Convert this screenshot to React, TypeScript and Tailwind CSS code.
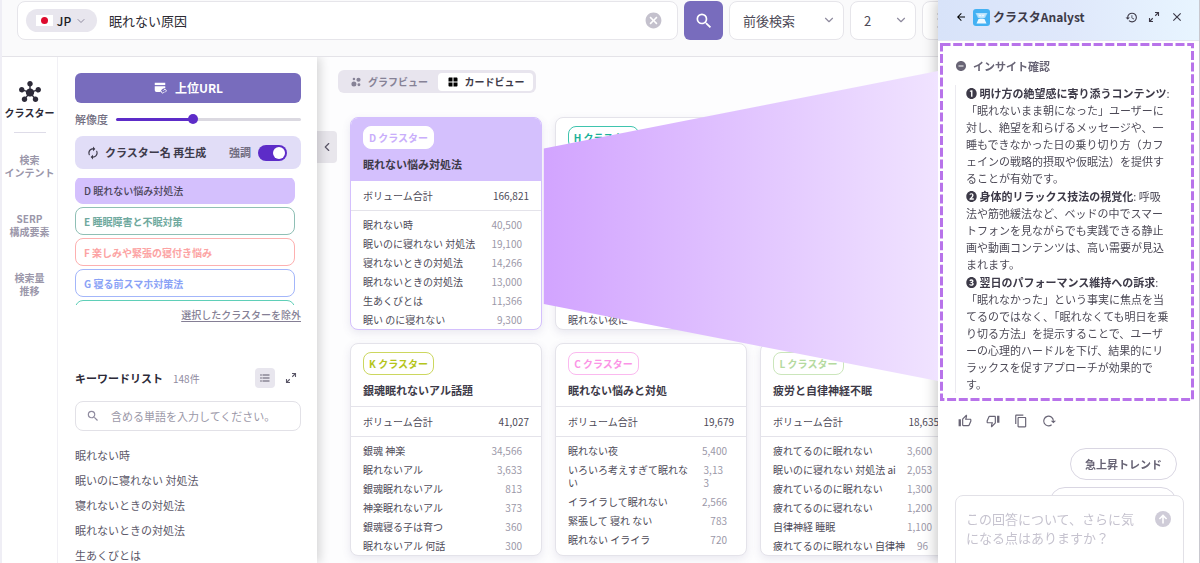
import React from "react";
import { ChevronDown, ChevronLeft } from "lucide-react";
import {
  MdArrowBack,
  MdAutorenew,
  MdCancel,
  MdClose,
  MdContentCopy,
  MdFormatListBulleted,
  MdHistory,
  MdHub,
  MdOutlineThumbDown,
  MdOutlineThumbUp,
  MdRemoveCircle,
  MdSearch,
  MdWindow,
} from "react-icons/md";

type Row = { name: string; value: string; wrapped?: boolean };
type Cluster = {
  tag: string;
  tagClass: string;
  title: string;
  total: string;
  active?: boolean;
  rows: Row[];
};

const clusters: Cluster[] = [
  {
    tag: "D クラスター",
    tagClass: "border-white bg-white text-[#c9aefb]",
    title: "眠れない悩み対処法",
    total: "166,821",
    active: true,
    rows: [
      { name: "眠れない時", value: "40,500" },
      { name: "眠いのに寝れない 対処法", value: "19,100" },
      { name: "寝れないときの対処法", value: "14,266" },
      { name: "眠れないときの対処法", value: "13,000" },
      { name: "生あくびとは", value: "11,366" },
      { name: "眠い のに寝れない", value: "9,300" },
    ],
  },
  {
    tag: "H クラスター",
    tagClass: "border-[#3fc4ae] text-[#1bb198]",
    title: "",
    total: "",
    rows: [
      { name: "", value: "" },
      { name: "", value: "" },
      { name: "", value: "" },
      { name: "", value: "" },
      { name: "", value: "" },
      { name: "眠れない夜に", value: "" },
    ],
  },
  { tag: "", tagClass: "border-transparent", title: "", total: "", rows: [] },
  {
    tag: "K クラスター",
    tagClass: "border-[#ccd75f] text-[#b5c51c]",
    title: "銀魂眠れないアル話題",
    total: "41,027",
    rows: [
      { name: "銀魂 神楽", value: "34,566" },
      { name: "眠れないアル", value: "3,633" },
      { name: "銀魂眠れないアル", value: "813" },
      { name: "神楽眠れないアル", value: "373" },
      { name: "銀魂寝る子は育つ", value: "360" },
      { name: "眠れないアル 何話", value: "300" },
    ],
  },
  {
    tag: "C クラスター",
    tagClass: "border-[#fbb9ef] text-[#fb94e6]",
    title: "眠れない悩みと対処",
    total: "19,679",
    rows: [
      { name: "眠れない夜", value: "5,400" },
      { name: "いろいろ考えすぎて眠れな\nい", value: "3,13\n3", wrapped: true },
      { name: "イライラして眠れない", value: "2,566" },
      { name: "緊張して 寝れ ない", value: "783" },
      { name: "眠れない イライラ", value: "720" },
    ],
  },
  {
    tag: "L クラスター",
    tagClass: "border-[#cbe6bb] text-[#b5daa0]",
    title: "疲労と自律神経不眠",
    total: "18,635",
    rows: [
      { name: "疲れてるのに眠れない", value: "3,600" },
      { name: "眠いのに寝れない 対処法 ai", value: "2,053" },
      { name: "疲れているのに眠れない", value: "1,300" },
      { name: "疲れてるのに寝れない", value: "1,200" },
      { name: "自律神経 睡眠", value: "1,100" },
      { name: "疲れてるのに眠れない 自律神", value: "96", wrapped: true },
    ],
  },
];

const clusterItems = [
  { label: "D 眠れない悩み対処法", style: "border-[#d4c0fd] bg-[#d4c0fd] text-[#4a4458]" },
  { label: "E 睡眠障害と不眠対策", style: "border-[#8fbfb5] text-[#6fa99e]" },
  { label: "F 楽しみや緊張の寝付き悩み", style: "border-[#fdb0b0] text-[#fca3a3]" },
  { label: "G 寝る前スマホ対策法", style: "border-[#a3b6fa] text-[#8aa2f6]" },
  { label: "", style: "border-[#5fcfb8] text-[#1bb198]" },
];

const keywords = [
  "眠れない時",
  "眠いのに寝れない 対処法",
  "寝れないときの対処法",
  "眠れないときの対処法",
  "生あくびとは",
];

const railItems = [
  ["検索", "インテント"],
  ["SERP", "構成要素"],
  ["検索量", "推移"],
];

const insights = [
  {
    head: "❶ 明け方の絶望感に寄り添うコンテンツ",
    tail: ":",
    lines: [
      "「眠れないまま朝になった」ユーザーに",
      "対し、絶望を和らげるメッセージや、一",
      "睡もできなかった日の乗り切り方（カフ",
      "ェインの戦略的摂取や仮眠法）を提供す",
      "ることが有効です。",
    ],
  },
  {
    head: "❷ 身体的リラックス技法の視覚化",
    tail: ": 呼吸",
    lines: [
      "法や筋弛緩法など、ベッドの中でスマー",
      "トフォンを見ながらでも実践できる静止",
      "画や動画コンテンツは、高い需要が見込",
      "まれます。",
    ],
  },
  {
    head: "❸ 翌日のパフォーマンス維持への訴求",
    tail: ":",
    lines: [
      "「眠れなかった」という事実に焦点を当",
      "てるのではなく、「眠れなくても明日を乗",
      "り切る方法」を提示することで、ユーザ",
      "ーの心理的ハードルを下げ、結果的にリ",
      "ラックスを促すアプローチが効果的で",
      "す。",
    ],
  },
];

function TopUrlIcon() {
  return (
    <svg viewBox="0 0 24 24" className="size-3.5" fill="none" aria-hidden="true">
      <path d="M3 3h18v4H3z" fill="currentColor" />
      <path d="M3 9h18v3.5a7 7 0 0 0-8 6.5H6a3 3 0 0 1-3-3z" fill="currentColor" />
      <path d="M17.5 16.5 19 15a2 2 0 0 1 3 3l-1.5 1.5M19.500 18.500 18 20a2 2 0 0 1-3-3" stroke="currentColor" strokeWidth="1.600" />
    </svg>
  );
}

function BubbleIcon() {
  return (
    <svg viewBox="0 0 24 24" className="size-2.5" fill="currentColor" aria-hidden="true">
      <circle cx="7" cy="16.500" r="6" />
      <circle cx="7" cy="5" r="3" />
      <circle cx="18" cy="6.500" r="5" />
      <circle cx="19" cy="18.500" r="3.500" />
    </svg>
  );
}

function ExpandIcon() {
  return (
    <svg viewBox="0 0 24 24" className="size-3" fill="none" stroke="currentColor" strokeWidth="2.200" aria-hidden="true">
      <path d="M14 3h7v7M21 3l-6.500 6.500M10 21H3v-7M3 21l6.500-6.500" />
    </svg>
  );
}

function AnalystIcon() {
  return (
    <svg viewBox="0 0 34 34" className="size-[17px]" aria-hidden="true">
      <rect width="34" height="34" rx="6" fill="#43b1f3" />
      <path d="M5 8h24l-5 10H10z" fill="#a9dcfb" />
      <path d="M8 9h18l-4 8H12z" fill="#c6e8fd" />
      <path d="M13 18h8v3h-8z" fill="#7cc9f8" />
      <path d="M11 20h12l4 9H7z" fill="#eef9ff" />
      <circle cx="14" cy="13" r="1.500" fill="#fff" />
      <circle cx="20" cy="13" r="1.500" fill="#fff" />
    </svg>
  );
}

function Header() {
  return (
    <header className="relative z-20 flex h-[57px] shrink-0 items-start gap-1.5 border-b border-[#e4e3e8] bg-[#fafafb] pl-[15px] pt-px text-[13px]">
      <div className="flex h-[39px] w-[661px] shrink-0 items-center rounded-lg border border-[#e6e5ea] bg-white pl-2 pr-3.5">
        <button className="flex h-[23px] w-[71px] items-center justify-center gap-1 rounded-full bg-[#e8e6ee] text-xs font-medium text-[#1c1b22]">
          <span className="flex h-[11px] w-[17px] items-center justify-center bg-white">
            <span className="size-[7px] rounded-full bg-[#dd0a2d]" />
          </span>
          JP
          <ChevronDown className="size-3 text-[#8f8b9f]" />
        </button>
        <input
          aria-label="検索キーワード"
          defaultValue="眠れない原因"
          className="ml-3 min-w-0 flex-1 text-[13px] text-[#2c2a33] outline-none"
        />
        <button aria-label="クリア">
          <MdCancel className="size-[19px] text-[#c4c1cd]" />
        </button>
      </div>
      <button aria-label="検索" className="flex size-[39px] shrink-0 items-center justify-center rounded-md bg-[#786cbd] text-white">
        <MdSearch className="size-5" />
      </button>
      <div className="relative w-[115px] shrink-0">
        <select
          aria-label="検索方法"
          className="h-[39px] w-full appearance-none rounded-lg border border-[#e6e5ea] bg-white pl-[13px] text-[#4d4a57]"
        >
          <option>前後検索</option>
        </select>
        <ChevronDown className="pointer-events-none absolute right-2 top-3 size-3.5 text-[#8f8b9f]" />
      </div>
      <div className="relative w-[66px] shrink-0">
        <select
          aria-label="階層"
          className="h-[39px] w-full appearance-none rounded-lg border border-[#e6e5ea] bg-white pl-[13px] text-[#4d4a57]"
        >
          <option>2</option>
        </select>
        <ChevronDown className="pointer-events-none absolute right-2 top-3 size-3.5 text-[#8f8b9f]" />
      </div>
      <button aria-label="メニュー" className="flex h-[39px] w-20 shrink-0 items-center rounded-lg border border-[#e6e5ea] bg-white pl-3.5 text-[#8f8b9f]">
        <svg viewBox="0 0 10 20" className="h-5 w-2.5" fill="currentColor" aria-hidden="true">
          <circle cx="1.500" cy="3" r="1" />
          <circle cx="1.500" cy="8" r="1" />
          <circle cx="1.500" cy="16" r="1" />
        </svg>
      </button>
    </header>
  );
}

function Rail() {
  return (
    <nav className="relative z-20 flex w-14 shrink-0 flex-col items-center border-r border-[#f1f0f5] bg-white text-center text-[10px] font-bold leading-[13px] text-[#9b97aa]">
      <a href="#cluster" className="mt-6 flex flex-col items-center gap-[3px] text-[#2c2a38]">
        <MdHub className="size-[22px]" />
        クラスター
      </a>
      <hr className="mt-[13px] mb-5 w-8 border-[#dedce8]" />
      {railItems.map(([first, second]) => (
        <a key={first} href={"#" + first} className="mb-[33px] block">
          {first}
          <br />
          {second}
        </a>
      ))}
    </nav>
  );
}

function SidePanel() {
  return (
    <aside className="relative z-10 flex w-[259px] shrink-0 flex-col bg-white pl-[17px] pr-4 pt-4 text-[11px] shadow-[3px_0_10px_rgba(0,0,0,0.16)]">
      <button className="flex h-[30px] shrink-0 items-center justify-center gap-2 rounded-md bg-[#786cbd] text-xs font-bold text-white">
        <TopUrlIcon />
        上位URL
      </button>
      <label className="flex h-8 shrink-0 items-center gap-2 font-medium text-[#716d80]">
        解像度
        <span className="relative flex h-3 flex-1 items-center">
          <input type="range" defaultValue={41} className="absolute inset-0 z-10 w-full opacity-0" />
          <span className="h-[3px] w-[41%] rounded-full bg-[#5d2cc8]" />
          <span className="relative -mx-1 size-2.5 rounded-full bg-[#5d2cc8]" />
          <span className="h-[3px] flex-1 rounded-full bg-[#dbd9e1]" />
        </span>
      </label>
      <div className="mt-px flex h-[33px] shrink-0 items-center rounded-lg bg-[#e1ddf7] pl-[11px] pr-3.5">
        <button className="flex items-center gap-[5px] font-bold text-[#3d3a4a]">
          <MdAutorenew className="size-3.5" />
          クラスター名 再生成
        </button>
        <label className="relative ml-auto flex items-center gap-[7px] font-bold text-[#716d80]">
          強調
          <input type="checkbox" role="switch" defaultChecked className="peer sr-only" />
          <span className="flex h-4 w-[29px] items-center justify-end rounded-full bg-[#5d2cc8] px-0.5">
            <span className="size-3 rounded-full bg-white" />
          </span>
        </label>
      </div>
      <ul className="mt-[9px] h-[127px] shrink-0 overflow-hidden pr-1.5 text-[10px] font-bold">
        {clusterItems.map((item, i) => (
          <li key={item.style} className={i === 0 ? "-mt-0.5 font-medium" : "mt-[3px]"}>
            <button className={"block h-7 w-full rounded-lg border pl-2 text-left " + item.style}>{item.label}</button>
          </li>
        ))}
      </ul>
      <a href="#exclude" className="mt-0.5 self-end text-[10px] font-medium text-[#857f95] underline underline-offset-2">
        選択したクラスターを除外
      </a>
      <div className="mt-[46px] flex h-5 shrink-0 items-center">
        <h2 className="font-bold text-[#2c2a38]">キーワードリスト</h2>
        <span className="ml-2.5 text-[10px] text-[#8f8b9f]">148件</span>
        <button aria-label="リスト表示" className="ml-auto flex size-5 items-center justify-center rounded bg-[#e8e6ee] text-[#5b5768]">
          <MdFormatListBulleted className="size-3" />
        </button>
        <button aria-label="拡大" className="ml-2.5 mr-1 text-[#5b5768]">
          <ExpandIcon />
        </button>
      </div>
      <label className="mt-[13px] flex h-[30px] shrink-0 items-center gap-[11px] rounded-lg border border-[#e2e1e7] pl-2.5 pr-2">
        <MdSearch className="size-3.5 text-[#8f8b9f]" />
        <input
          aria-label="キーワード絞り込み"
          placeholder="含める単語を入力してください。"
          className="min-w-0 flex-1 text-[11px] outline-none placeholder:text-[#9b98a8]"
        />
      </label>
      <ul className="mt-3 leading-[25px] text-[#5b5768]">
        {keywords.map((k) => (
          <li key={k}>{k}</li>
        ))}
      </ul>
    </aside>
  );
}

function ClusterCard({ c }: { c: Cluster }) {
  return (
    <article
      className={
        "flex h-[213px] flex-col overflow-hidden rounded-lg border bg-white shadow-[0_3px_8px_rgba(90,80,140,0.12)] " +
        (c.active ? "border-[#d4c0fd]" : "border-[#e4e3ea]")
      }
    >
      <div className={"h-[63px] shrink-0 border-b px-3 pt-2 " + (c.active ? "border-[#d4c0fd] bg-[#d4c0fd]" : "border-[#e4e3ea]")}>
        <span className={"flex h-[23px] w-[71px] items-center justify-center rounded-lg border text-[10px] font-bold " + c.tagClass}>
          {c.tag}
        </span>
        <h3 className="mt-[7px] text-[11px] font-bold leading-4 text-[#3d3a48]">{c.title}</h3>
      </div>
      <dl className="text-[10px] leading-[13px] text-[#4d4a57]">
        <div className="flex h-[30px] items-center justify-between border-b border-[#e4e3ea] px-3">
          <dt>{c.total && "ボリューム合計"}</dt>
          <dd>{c.total}</dd>
        </div>
        <div className="flex flex-col gap-1.5 pl-3 pr-[19px] pt-[7px]">
          {c.rows.map((r, i) => (
            <div key={i} className="flex min-h-[13px] justify-between whitespace-pre">
              <dt>{r.name}</dt>
              <dd className={r.wrapped ? "pr-1 text-[#9b98a8]" : "text-[#9b98a8]"}>{r.value}</dd>
            </div>
          ))}
        </div>
      </dl>
    </article>
  );
}

function Main() {
  return (
    <main className="relative min-w-0 flex-1 overflow-hidden bg-[#fdfdfe] pl-[33px] pt-[13px]">
      <button
        aria-label="パネルを閉じる"
        className="absolute left-0 top-[74px] flex h-8 w-5 items-center justify-center rounded-r bg-[#e8e6ec] text-[#5b5768]"
      >
        <ChevronLeft className="size-3.5" />
      </button>
      <div className="-ml-3 flex h-[23px] w-[198px] items-center rounded-md bg-[#e8e5ee] px-[3px] text-[10px] font-bold">
        <button className="flex flex-1 items-center justify-center gap-[7px] text-[#868296]">
          <BubbleIcon />
          グラフビュー
        </button>
        <button className="flex h-[18px] w-[95px] items-center justify-center gap-1.5 rounded bg-white text-[#3d3a48]">
          <MdWindow className="size-3 text-black" />
          カードビュー
        </button>
      </div>
      <div className="mt-6 grid grid-cols-[repeat(3,192px)] gap-[13px]">
        {clusters.map((c, i) => (
          <ClusterCard key={i} c={c} />
        ))}
      </div>
    </main>
  );
}

function Beam() {
  return (
    <svg
      viewBox="0 0 395 310"
      className="pointer-events-none absolute right-full top-[71px] h-[310px] w-[395px]"
      aria-hidden="true"
    >
      <defs>
        <linearGradient id="beam" x1="0" x2="1" y1="0" y2="0">
          <stop offset="0" stopColor="#d2a4ff" />
          <stop offset="1" stopColor="#f0e3ff" />
        </linearGradient>
      </defs>
      <path d="M0.800 77.500 395 0v310L0.800 233z" fill="url(#beam)" />
    </svg>
  );
}

function Drawer() {
  return (
    <aside className="fixed inset-y-0 right-0 z-30 flex w-[262px] flex-col border-r border-[#c9c8cf] bg-white text-[11px] text-[#4d4a57] shadow-[-3px_0_12px_rgba(0,0,0,0.2)]">
      <Beam />
      <div className="flex h-[41px] shrink-0 items-center border-b border-[#e3e6f0] bg-linear-to-r from-[#d8e3f9] via-[#dfe8fb] to-[#e8f5ff] pb-1.5 pl-[17px] pr-[15px] text-[#3d3a48]">
        <button aria-label="戻る">
          <MdArrowBack className="size-3 text-black" />
        </button>
        <span className="ml-1.5">
          <AnalystIcon />
        </span>
        <h2 className="ml-[3px] text-xs font-bold">クラスタAnalyst</h2>
        <div className="ml-auto flex items-center gap-2.5">
          <button aria-label="履歴">
            <MdHistory className="size-[13px]" />
          </button>
          <button aria-label="全画面">
            <ExpandIcon />
          </button>
          <button aria-label="閉じる">
            <MdClose className="size-3.5" />
          </button>
        </div>
      </div>
      <section className="relative ml-0.5 mr-[5px] mt-0.5 h-[358px] shrink-0 pl-[15px] pt-[15px]">
        <svg className="pointer-events-none absolute inset-0 size-full" aria-hidden="true">
          <rect x="1.500" y="1.500" width="251" height="355" fill="none" stroke="#b873ea" strokeWidth="3" strokeDasharray="9 2.700" />
        </svg>
        <h3 className="flex items-center gap-1.5 font-bold leading-4 text-[#686475]">
          <MdRemoveCircle className="size-3" />
          インサイト確認
        </h3>
        <div className="mt-[11px] flex flex-col gap-px whitespace-pre border-l border-[#ebeaf0] pl-2.5 leading-[17px]">
          {insights.map((s) => (
            <div key={s.head}>
              <p className="flex">
                <strong className="text-[#3d3a48]">{s.head}</strong>
                <span>{s.tail}</span>
              </p>
              {s.lines.map((line) => (
                <p key={line}>{line}</p>
              ))}
            </div>
          ))}
        </div>
      </section>
      <div className="mt-[13px] flex items-center gap-3.5 pl-5 text-[#686475]">
        <button aria-label="高評価">
          <MdOutlineThumbUp className="size-3.5" />
        </button>
        <button aria-label="低評価">
          <MdOutlineThumbDown className="size-3.5" />
        </button>
        <button aria-label="コピー">
          <MdContentCopy className="size-3.5" />
        </button>
        <button aria-label="再生成">
          <svg viewBox="0 0 24 24" className="size-3.5" fill="none" stroke="currentColor" strokeWidth="2" aria-hidden="true">
            <path d="M16.500 18.500a8.300 8.300 0 1 1 3-7" />
            <path d="M15 11.500h9l-4.500 4.500z" fill="currentColor" stroke="none" />
          </svg>
        </button>
      </div>
      <div className="mt-5 flex shrink-0 flex-col items-end gap-[7px] pr-[22px] font-bold text-[#686475]">
        <button className="h-8 w-[107px] rounded-full border border-[#d9d6e2]">急上昇トレンド</button>
        <button aria-label="その他の提案" className="h-8 w-32 rounded-full border border-[#d9d6e2]" />
      </div>
      <div className="z-10 ml-[17px] mr-[15px] -mt-6 flex h-20 shrink-0 items-start rounded-lg border border-[#e2e1e7] bg-white pl-2.5 pr-3 pt-[13px]">
        <textarea
          aria-label="質問"
          placeholder="この回答について、さらに気になる点はありますか？"
          className="h-[60px] w-[175px] resize-none text-[13px] leading-[19px] outline-none placeholder:text-[#c6c3cf]"
        />
        <button aria-label="送信" className="ml-auto mt-0.5">
          <svg viewBox="0 0 20 20" className="size-4" aria-hidden="true">
            <circle cx="10" cy="10" r="10" fill="#cfccd8" />
            <path d="M10 15.500V5.500M5.500 10 10 5.500l4.500 4.500" fill="none" stroke="#fff" strokeWidth="2" />
          </svg>
        </button>
      </div>
    </aside>
  );
}

export default function App() {
  return (
    <div
      lang="ja"
      className="flex h-screen flex-col overflow-hidden border-l-2 border-[#efeef5] bg-white font-['Noto_Sans_CJK_JP',sans-serif]"
    >
      <Header />
      <div className="flex min-h-0 flex-1">
        <Rail />
        <SidePanel />
        <Main />
      </div>
      <Drawer />
    </div>
  );
}
